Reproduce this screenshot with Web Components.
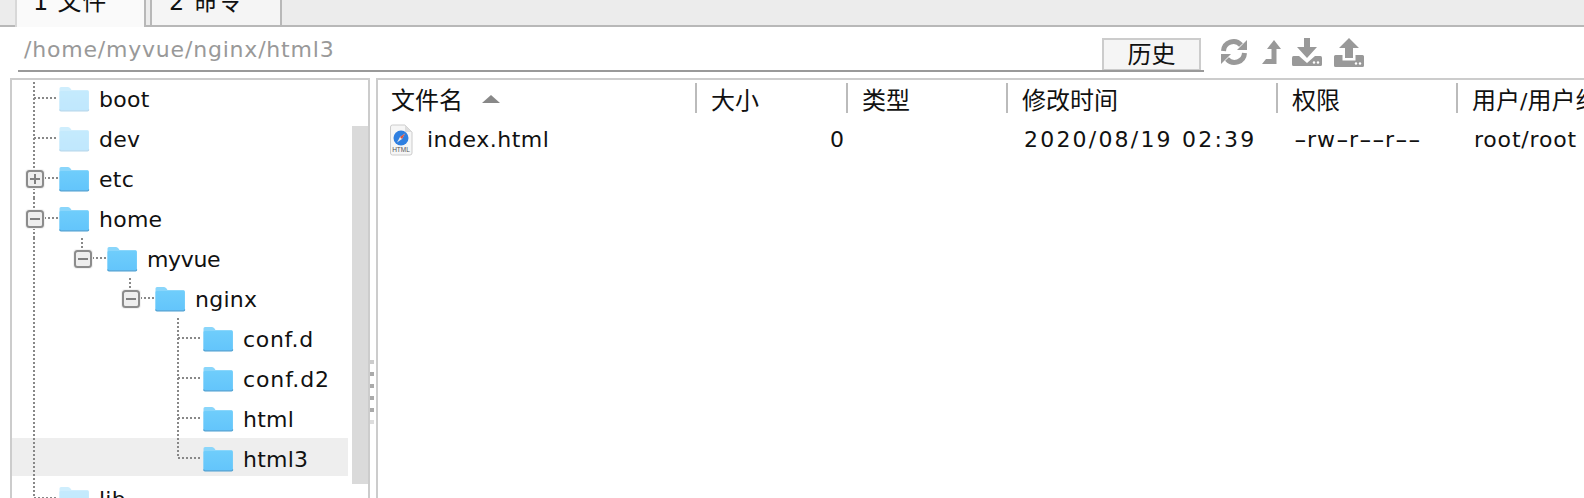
<!DOCTYPE html>
<html lang="zh"><head><meta charset="utf-8"><title>文件</title>
<style>
html,body{margin:0;height:100%;overflow:hidden;background:#fff;}
body{font:22px/1.2 "DejaVu Sans","Noto Sans CJK SC",sans-serif;color:#111;}
</style></head><body>
<file-browser>
  <tab-bar><tab-item active>1 文件</tab-item><tab-item>2 命令</tab-item></tab-bar>
  <path-bar path="/home/myvue/nginx/html3"></path-bar>
  <split-view>
    <tree-panel slot="left">
      <tree-row w="46" faded d="M22 0V40M22 20H46">boot</tree-row>
      <tree-row w="46" faded d="M22 0V40M22 20H46">dev</tree-row>
      <tree-row w="46" t="22" sign="+" d="M22 0V12M22 30V40M32 20H46">etc</tree-row>
      <tree-row w="46" t="22" sign="-" d="M22 0V12M22 30V40M32 20H46">home</tree-row>
      <tree-row w="94" t="70" sign="-" style="--ls:-.35px" d="M22 0V40M70 0V12M80 20H94">myvue</tree-row>
      <tree-row w="142" t="118" sign="-" d="M22 0V40M118 0V12M128 20H142">nginx</tree-row>
      <tree-row w="190" style="--ls:.7px" d="M22 0V40M166 0V40M166 20H190">conf.d</tree-row>
      <tree-row w="190" style="--ls:.9px" d="M22 0V40M166 0V40M166 20H190">conf.d2</tree-row>
      <tree-row w="190" d="M22 0V40M166 0V40M166 20H190">html</tree-row>
      <tree-row w="190" selected d="M22 0V40M166 0V20M166 20H190">html3</tree-row>
      <tree-row w="46" faded d="M22 0V20M22 20H46">lib</tree-row>
    </tree-panel>
    <file-table slot="right"></file-table>
  </split-view>
</file-browser>
<script>
function def(name, css, html){
  customElements.define(name, class extends HTMLElement{
    connectedCallback(){
      if(this.shadowRoot) return;
      const r=this.attachShadow({mode:"open"});
      const a=n=>this.getAttribute(n);
      r.innerHTML=`<style>${css}</style>`+(typeof html==="function"?html(a,this):html);
    }
  });
}
const FOLDER=`<svg width="32" height="26" viewBox="0 0 32 26" aria-hidden="true">
<defs><linearGradient id="fg" x1="0" y1="0" x2="0" y2="1"><stop offset="0" stop-color="#6fcdfb"/><stop offset="1" stop-color="#63c5fb"/></linearGradient></defs>
<path d="M1.5 23V2.5Q1.5 1 3 1H10Q11.5 1 12.5 2.5L13.5 4H29.5Q30.8 4 30.8 5.5V23Q30.8 24.5 29.5 24.5H3Q1.5 24.5 1.5 23Z" fill="#8ad6fb"/>
<path d="M1.5 23V6Q1.5 5 3 5H29.5Q30.8 5 30.8 6V23Q30.8 24.5 29.5 24.5H3Q1.5 24.5 1.5 23Z" fill="url(#fg)"/>
<path d="M1.5 23.5Q2 24.8 3 24.8H29.5Q30.5 24.8 30.8 23.5" fill="none" stroke="#4c9fd2" stroke-width="1.2"/>
</svg>`;
def("file-browser",":host{display:flex;flex-direction:column;height:498px;overflow:hidden}","<slot></slot>");
def("tab-bar",`:host{display:flex;height:27px;flex:none;overflow:hidden;align-items:flex-end;background:linear-gradient(#ececec,#ececec) 0 0/100% 25px no-repeat,#b8b8b8;padding-left:15px;gap:4px;box-sizing:border-box}`,"<slot></slot>");
def("tab-item",`:host{display:block;box-sizing:border-box;width:132px;height:40px;padding:0 0 0 17px;border:2px solid #b8b8b8;border-top:none;background:#f5f5f5;font-size:24px;line-height:30px;letter-spacing:.8px;white-space:pre;margin-top:-13px;flex:none}
:host([active]){background:#fafafa;border-bottom:none;border-left-color:#d8d8d8;width:131px;padding-left:16px}`,"<slot></slot>");
def("path-bar",`:host{display:flex;height:45px;flex:none;padding-left:18px;margin-bottom:6px;box-sizing:border-box;align-items:flex-end}
.in{width:1186px;height:45px;box-sizing:border-box;border-bottom:2px solid #999;display:flex;align-items:flex-end;justify-content:space-between;padding:0 3px 0 6px}
.p{color:#999;font-size:22px;line-height:30px;letter-spacing:.8px;margin-bottom:5px}
button{width:99px;height:32px;margin:0;padding:0;box-sizing:border-box;border:2px solid #ccc;border-bottom-width:1px;background:#f5f5f5;font:24px/26px "DejaVu Sans","Noto Sans CJK SC",sans-serif;color:#111}
.ic{display:flex;align-items:center;height:45px;padding:5px 0 0 16px;box-sizing:border-box}
svg{display:block;fill:#999;flex:none}`,
(a)=>`<div class="in"><span class="p">${a("path")}</span><button>历史</button></div>
<div class="ic">
<svg width="28" height="28" viewBox="0 0 28 28" style="margin-right:14px"><path d="M3.5 13A10 10 0 0 1 21 7" fill="none" stroke="#999" stroke-width="5"/><path d="M27 2V12H17Z"/><path d="M24.5 15A10 10 0 0 1 7 21" fill="none" stroke="#999" stroke-width="5"/><path d="M1 26V16H11Z"/></svg>
<svg width="19" height="24" viewBox="0 0 19 24" style="margin-right:11px"><path d="M12 0L19 9H14.5V24H0L4 19H9.5V9H5Z"/></svg>
<svg width="30" height="28" viewBox="0 0 30 28" style="margin-right:12px"><path d="M12 0H18V9H25L15 20L5 9H12Z"/><path d="M1.5 18H7L15 25L23 18H28.5Q30 18 30 20V26.500Q30 28 28.5 28H1.5Q0 28 0 26.500V20Q0 18 1.500 18Z"/><circle cx="22" cy="24.500" r="1.200" fill="#fff"/><circle cx="26" cy="24.500" r="1.200" fill="#fff"/></svg>
<svg width="30" height="29" viewBox="0 0 30 29"><path d="M15 0L25 10H19V20H11V10H5Z"/><path d="M1.500 17H8.500V22.500H21.500V17H28.500Q30 17 30 18.500V27.500Q30 29 28.500 29H1.500Q0 29 0 27.500V18.500Q0 17 1.500 17Z"/><circle cx="22" cy="25.500" r="1.200" fill="#fff"/><circle cx="26" cy="25.500" r="1.200" fill="#fff"/></svg>
</div>`);
def("split-view",`:host{display:flex;flex:1;min-height:0;padding-left:10px}
.dots{flex:none;width:6px;box-sizing:border-box;padding-top:282px;display:flex;flex-direction:column;gap:8px}
.dots i{display:block;width:4px;height:4px;background:#aaa}
::slotted([slot=right]){flex:1;min-width:0}`,
`<slot name="left"></slot><div class="dots"><i style="background:#ccc"></i><i></i><i></i><i></i><i></i><i style="background:#ddd"></i></div><slot name="right"></slot>`);
def("tree-panel",`:host{display:flex;flex:none;width:360px;box-sizing:border-box;border:solid #ccc;border-width:2px 2px 0;overflow:hidden}
.tree{width:336px;flex:none;margin-top:-2px}
.gap{width:4px;flex:none}
.bar{width:16px;flex:none;margin-top:46px;height:358px;background:#dadada}`,
`<div class="tree"><slot></slot></div><div class="gap"></div><div class="bar"></div>`);
def("tree-row",`:host{display:flex;height:40px;font-size:22px;align-items:center}
:host([selected]){background:linear-gradient(#eee,#eee) 0 0/100% 38px no-repeat}
svg{display:block;flex:none}
.g{overflow:visible}
.f{margin-top:1px;margin-right:9px}
:host([faded]) .f{opacity:.4}
span{position:relative;top:2px;letter-spacing:var(--ls,.25px);white-space:pre}`,
(a)=>{
  const t=a("t"),s=a("sign"),w=+a("w");
  let box="";
  if(t){const x=+t+1;box=`<rect x="${x-10}" y="11" width="20" height="20" rx="4" fill="#f2f2f2"/><rect x="${x-8}" y="13" width="16" height="16" rx="2.500" fill="#eee" stroke="#8c8c8c" stroke-width="2"/><path d="M${x-5} 21H${x+5}${s==="+"?`M${x} 16V26`:""}" stroke="#808080" stroke-width="2" fill="none"/>`;}
  return `<svg class="g" width="${w}" height="40" viewBox="0 0 ${w} 40"><path d="${a("d")}" fill="none" stroke="#888" stroke-width="2" stroke-dasharray="2 2"/>${box}</svg><div class="f">${FOLDER}</div><span><slot></slot></span>`;
});
def("file-table",`:host{display:block;box-sizing:border-box;border:solid #ccc;border-width:2px 0 0 2px;--cols:317px 151px 160px 270px 180px 1fr;overflow:hidden}
.r{display:grid;grid-template-columns:var(--cols);white-space:nowrap}
.h{height:40px;padding-top:3px;box-sizing:border-box;font-size:24px}
.h>div{height:30px;padding:6px 0 0 14px;line-height:24px;border-left:2px solid #bbb;box-sizing:border-box;overflow:hidden;display:flex;align-items:center;gap:19px}
.h>div:first-child{border:none;padding-left:13px}
.tri{width:0;height:0;border:9px solid transparent;border-top:none;border-bottom:8px solid #888;flex:none;margin-top:-5px}
.d{height:40px;align-items:center;line-height:40px;font-size:22px}
.d>div{padding-left:18px;display:flex;align-items:center}
.d>div:first-child{padding-left:11px;gap:14px}
.n{letter-spacing:.5px}
.z{justify-content:flex-end;padding:0 2px 0 0 !important}
.dash{display:inline-block;width:13px;transform:scaleX(1.6);transform-origin:0 50%;font-style:normal}
svg{display:block;flex:none}`,
`<div class="r h"><div>文件名<i class="tri"></i></div><div>大小</div><div>类型</div><div>修改时间</div><div>权限</div><div><span>用户<span style="font-size:22px">/</span>用户组</span></div></div>
<div class="r d"><div><svg width="24" height="32" viewBox="0 0 24 32"><path d="M1.500 3Q1.500 1 3.500 1H16L23 8V29Q23 31 21 31H3.500Q1.500 31 1.500 29Z" fill="#f6f6f6" stroke="#ccc"/><path d="M16 1V8H23Z" fill="#ddd"/><circle cx="12" cy="14" r="7.500" fill="#2f7fe0"/><path d="M16 9.500L13 15L8 18.500L11 13Z" fill="#e8e8e8"/><path d="M16 9.500L13 15L11 13Z" fill="#e0533a"/><text x="12" y="28" text-anchor="middle" font-family="Liberation Sans,sans-serif" font-size="6.500" fill="#555">HTML</text></svg><span class="n">index.html</span></div><div class="z">0</div><div></div><div style="letter-spacing:2.2px">2020/08/19 02:39</div><div style="letter-spacing:1px"><em class="dash">-</em>rw<em class="dash">-</em>r<em class="dash">-</em><em class="dash">-</em>r<em class="dash">-</em><em class="dash">-</em></div><div style="letter-spacing:.8px">root/root</div></div>`);
</script>
</body></html>
